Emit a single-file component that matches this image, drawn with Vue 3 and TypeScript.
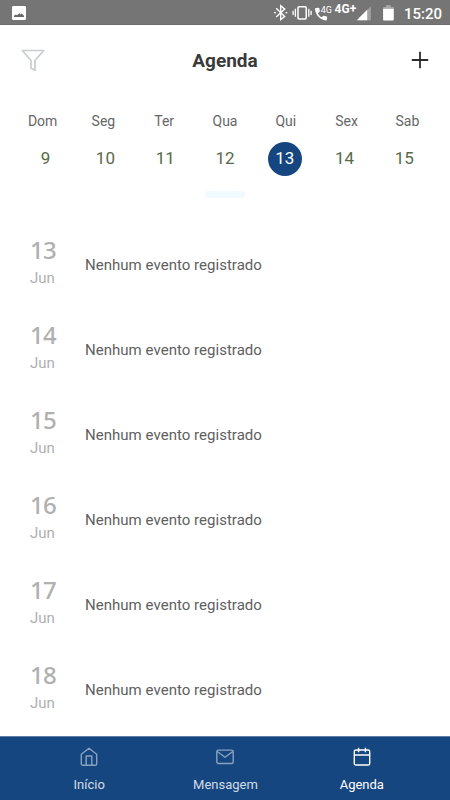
<script setup lang="ts">
interface Day { label: string; date: number }
const week: Day[] = ['Dom', 'Seg', 'Ter', 'Qua', 'Qui', 'Sex', 'Sab'].map((label, i) => ({ label, date: 9 + i }))
const selected = 13
const agenda: number[] = [13, 14, 15, 16, 17, 18]
</script>

<template>
  <div class="screen">
    <div class="status">
      <svg class="picture" width="14" height="14" viewBox="0 0 14 14">
        <rect width="14" height="14" rx="1.2" fill="#fff" />
        <path d="M2 11V9.8l1.7-1.4 1.3.9 2.5-2.1 1 1.2 1-.8L12 9.8V11z" fill="#686868" />
      </svg>
      <svg class="signals" width="144" height="24" viewBox="272 0 144 24" fill="none">
        <path d="M276.2 8.2l8.5 8.2-4 3.2V5.8l4 3.3-8.5 7.8" stroke="#fff" stroke-width="1.4" />
        <circle cx="275" cy="12.7" r=".9" fill="#fff" /><circle cx="286.4" cy="12.7" r=".9" fill="#fff" />
        <rect x="298" y="6.7" width="8.2" height="12.2" rx="1" stroke="#fff" stroke-width="1.5" />
        <path d="M295.4 8.8v8M293.1 10.7v4.3M308.8 8.8v8M311.1 10.7v4.3" stroke="#fff" stroke-width="1.3" />
        <path d="M315.8 8l2.8-.2c.5 0 .7.2.8.7l.4 2.5c0 .4-.1.7-.4.9l-1.5 1.3c.9 1.8 2 3 3.6 4l1.7-1.3c.3-.2.6-.3.9-.2l2.5.8c.5.2.7.5.6.9l-.4 2.4c-.1.5-.4.7-.9.6-5.7-.6-10.4-5.2-10.9-11.4 0-.6.2-.9.8-1z" fill="#fff" />
        <text x="320.7" y="12.8" class="small-net">4G</text>
        <text x="334.6" y="12.8" class="net">4G+</text>
        <path d="M370.8 6.2v14h-14z" fill="#a2a2a2" />
        <path d="M367.2 9.8v10.4h-10.4z" fill="#fff" />
        <path d="M386 5.3h4.8v1.6h2.2c.5 0 .8.3.8.8v1h-10.7v-1c0-.5.3-.8.8-.8h2.1z" fill="#aaa" />
        <path d="M383.1 8.7h10.7v11c0 .5-.3.8-.8.8h-9.1c-.5 0-.8-.3-.8-.8z" fill="#fff" />
      </svg>
      <span class="clock">15:20</span>
    </div>

    <header class="header">
      <svg width="24" height="24" viewBox="0 0 24 24" fill="none" stroke="#c8cdd2" stroke-width="1.7" stroke-linejoin="round">
        <path d="M1.3 2.5H22.7L14 12.5v9.7l-4-1.9v-7.8z" />
      </svg>
      <h1>Agenda</h1>
      <svg width="18" height="18" viewBox="0 0 18 18" stroke="#2b2b2b" stroke-width="1.8">
        <path d="M9 .8v16.4M.8 9h16.4" />
      </svg>
    </header>

    <section class="calendar">
      <div class="labels">
        <span v-for="day in week" :key="day.label">{{ day.label }}</span>
      </div>
      <div class="dates">
        <span v-for="day in week" :key="day.date"><b :class="{ selected: day.date === selected }">{{ day.date }}</b></span>
      </div>
      <div class="knob"></div>
    </section>

    <main class="agenda">
      <article v-for="date in agenda" :key="date" class="row">
        <div class="date"><strong>{{ date }}</strong><small>Jun</small></div>
        <p>Nenhum evento registrado</p>
      </article>
    </main>

    <nav class="tabs">
      <a class="tab">
        <svg width="18" height="20" viewBox="0 0 18 20">
          <path d="M1.3 7.2L9 1.2l7.7 6v9.5c0 1-.6 1.6-1.6 1.6H2.9c-1 0-1.6-.6-1.6-1.6z" />
          <path d="M6.2 18V9h5.6v9" />
        </svg>
        <span>Início</span>
      </a>
      <a class="tab">
        <svg width="18" height="20" viewBox="0 0 18 20">
          <rect x=".8" y="3.1" width="16.4" height="13.4" rx="1.6" />
          <path d="M1.2 4.5L9 10.3l7.8-5.8" />
        </svg>
        <span>Mensagem</span>
      </a>
      <a class="tab active">
        <svg width="18" height="20" viewBox="0 0 18 20">
          <rect x="1.3" y="3" width="15.4" height="15" rx="1.6" />
          <path d="M1.3 8h15.4M5.6.8v4.4M12.4.8v4.4" />
        </svg>
        <span>Agenda</span>
      </a>
    </nav>
  </div>
</template>

<style>
body { margin: 0; background: #fff; }
</style>

<style scoped>
.screen { width: 450px; height: 800px; display: flex; flex-direction: column; overflow: hidden; background: #fff; font-family: Roboto, sans-serif; }
.status { box-sizing: border-box; flex: none; height: 25px; display: flex; align-items: flex-start; padding-left: 12px; background: #757575; border-bottom: 1px solid #6d6d6d; }
.picture { margin-top: 6px; }
.signals { margin-left: 246px; }
.small-net { font: 400 9px Roboto, sans-serif; fill: #fff; }
.net { font: 700 12px Roboto, sans-serif; fill: #fff; }
.clock { margin: 5px 0 0 -12px; font-size: 15px; line-height: 19px; font-weight: 500; color: #fff; }
.header { flex: none; height: 70px; box-sizing: border-box; padding: 0 21px; display: flex; align-items: center; justify-content: space-between; }
.header h1 { margin: 2px 0 0 -6px; font-size: 19px; line-height: 24px; font-weight: 700; color: #3a3a3a; }
.calendar { flex: none; height: 129px; display: flex; flex-direction: column; align-items: center; }
.labels { width: 425.6px; height: 18px; margin-top: 17px; display: grid; grid-template-columns: repeat(7, 1fr); text-align: center; font-size: 14px; line-height: 18px; color: #666; }
.dates { width: 418.6px; height: 34px; margin-top: 12px; display: grid; grid-template-columns: repeat(7, 1fr); justify-items: center; }
.dates b { display: block; width: 34px; height: 34px; border-radius: 50%; text-align: center; line-height: 33px; font-size: 17px; font-weight: 400; color: #586a49; }
.dates .selected { background: #15467f; color: #fff; }
.knob { width: 40px; height: 7px; margin-top: 15px; border-radius: 3px; background: #f0faff; }
.agenda { flex: 1; min-height: 0; padding-top: 11px; overflow: hidden; }
.row { height: 85px; display: flex; }
.date { width: 55px; padding-left: 30px; display: flex; flex-direction: column; }
.date strong { font: 500 24px/30px "Noto Sans", sans-serif; letter-spacing: -0.8px; color: #b0b0b0; }
.date small { margin-top: 3px; font-size: 15px; line-height: 20px; color: #b0b0b0; }
.row p { margin: 19px 0 0; font-size: 15px; line-height: 22px; letter-spacing: 0.03px; color: #606060; }
.tabs { box-sizing: border-box; flex: none; height: 64px; padding: 0 20px 0 21px; display: grid; grid-template-columns: repeat(3, 1fr); background: #15467f; border-top: 1px solid #5f7fa5; }
.tab { display: flex; flex-direction: column; align-items: center; padding-top: 10px; color: #d3dce7; }
.tab svg { fill: none; stroke: #88a2c0; stroke-width: 1.4; stroke-linejoin: round; }
.tab span { margin-top: 9px; font-size: 13px; line-height: 18px; }
.active { color: #fff; }
.active svg { stroke: #fff; }
</style>
